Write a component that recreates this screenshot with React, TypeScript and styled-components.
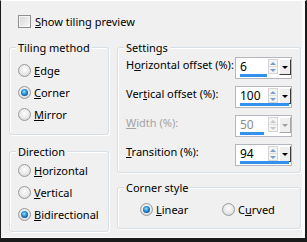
import styled, { createGlobalStyle } from 'styled-components';

const GlobalStyle = createGlobalStyle`
  html, body {
    margin: 0;
    padding: 0;
    background: #f0f0f0;
  }
  body {
    font-family: "Noto Sans", "Liberation Sans", sans-serif;
  }
`;

const Dialog = styled.div`
  box-sizing: border-box;
  width: 307px;
  height: 242px;
  padding: 13px 0 0 8px;
  background: #f0f0f0;
  border-top: 1px solid #fff;
  border-left: 1px solid #1a1a1a;
  border-right: 2px solid #1a1a1a;
  border-bottom: 4px solid #1a1a1a;
  box-shadow: inset -3px -1px 0 #fbfbfb;
  font-size: 11px;
  line-height: 15px;
  color: #000;
`;

const PreviewRow = styled.label`
  display: flex;
  align-items: center;
  gap: 4px;
  height: 15px;
  margin-left: 9px;
`;

const CheckBox = styled.span`
  box-sizing: border-box;
  width: 13px;
  height: 13px;
  flex: none;
  border: 1px solid #8e8f8f;
  background: linear-gradient(135deg, #d4d4d4 0%, #eaeaea 55%, #f8f8f8 100%);
  box-shadow: inset 0 0 0 1px #f6f6f6;
`;

const Columns = styled.div`
  display: grid;
  grid-template-columns: 100px 184px;
  column-gap: 8px;
  margin-top: 11px;
`;

const Column = styled.div<{ $gap: number }>`
  display: flex;
  flex-direction: column;
  gap: ${(p) => p.$gap}px;
`;

const Group = styled.fieldset<{ $top: number; $bottom: number }>`
  margin: 0;
  min-width: 0;
  padding: ${(p) => p.$top}px 8px ${(p) => p.$bottom}px;
  border: 1px solid #d5dfe5;
  border-radius: 3px;
  box-shadow: inset 1px 1px 0 #fff, 1px 1px 0 #fff;
`;

const GroupTitle = styled.legend`
  padding: 0 2px;
  margin-left: -2px;
  background: #f0f0f0;
  line-height: 15px;
`;

const OptionRow = styled.label`
  display: flex;
  align-items: center;
  gap: 3px;
  height: 22px;
  white-space: nowrap;
`;

const Radio = styled.span<{ $checked?: boolean }>`
  box-sizing: border-box;
  width: 13px;
  height: 13px;
  flex: none;
  display: flex;
  align-items: center;
  justify-content: center;
  border-radius: 50%;
  border: 1px solid #9a9a9a;
  background: radial-gradient(circle at 50% 40%, #fdfdfd 0%, #e8e8e8 55%, #cdcdcd 100%);

  &::after {
    content: '';
    display: ${(p) => (p.$checked ? 'block' : 'none')};
    width: 7px;
    height: 7px;
    border-radius: 50%;
    background: radial-gradient(circle at 45% 40%, #9fe2ff 0%, #2a94d8 40%, #0c4a86 80%, #0a3563 100%);
  }
`;

const CornerOptions = styled.div`
  display: grid;
  grid-template-columns: 82px auto;
  padding-left: 14px;
`;

const FieldList = styled.div`
  display: flex;
  flex-direction: column;
  gap: 7px;
`;

const FieldRow = styled.div`
  display: flex;
  justify-content: space-between;
  align-items: flex-start;
  height: 22px;
`;

const FieldLabel = styled.span<{ $disabled?: boolean }>`
  white-space: nowrap;
  color: ${(p) => (p.$disabled ? '#a3a3a3' : '#000')};
`;

const Spin = styled.div`
  box-sizing: border-box;
  width: 57px;
  height: 22px;
  display: flex;
  flex-direction: column;
  padding-bottom: 1px;
  border: 1px solid #b4b7bd;
  background: #fff;
`;

const SpinTop = styled.div`
  display: flex;
  height: 16px;
`;

const SpinValue = styled.span<{ $disabled?: boolean }>`
  flex: 1;
  padding-left: 4px;
  font-size: 12px;
  line-height: 17px;
  color: ${(p) => (p.$disabled ? '#8c8c8c' : '#000')};
`;

const Stepper = styled.div`
  box-sizing: border-box;
  width: 10px;
  height: 15px;
  margin: 1px 1px 0;
  display: flex;
  flex-direction: column;
  border: 1px solid #d6d6d6;
  background: #f4f4f4;
`;

const StepHalf = styled.span<{ $down?: boolean; $disabled?: boolean }>`
  flex: 1;
  display: flex;
  align-items: center;
  justify-content: center;
  border-top: ${(p) => (p.$down ? '1px solid #e0e0e0' : 'none')};

  &::before {
    content: '';
    width: 0;
    height: 0;
    border-left: 3px solid transparent;
    border-right: 3px solid transparent;
    ${(p) => (p.$down ? 'border-top' : 'border-bottom')}: 3px solid
      ${(p) => (p.$disabled ? '#c8c8c8' : '#7c9fcb')};
  }
`;

const DropButton = styled.span<{ $disabled?: boolean }>`
  box-sizing: border-box;
  width: 12px;
  height: 16px;
  margin-top: 1px;
  display: flex;
  align-items: center;
  justify-content: center;
  background: #efefef;
  border-top: 1px solid #fff;
  border-left: 1px solid #fff;
  border-right: 1px solid ${(p) => (p.$disabled ? '#a8a8a8' : '#3c3c3c')};
  border-bottom: 1px solid ${(p) => (p.$disabled ? '#a8a8a8' : '#3c3c3c')};

  &::before {
    content: '';
    width: 0;
    height: 0;
    border-left: 3px solid transparent;
    border-right: 3px solid transparent;
    border-top: 3px solid ${(p) => (p.$disabled ? '#a0a0a0' : '#000')};
  }
`;

const Bar = styled.div`
  height: 3px;
  margin: 0 2px 0 4px;
`;

const BarFill = styled.div`
  height: 100%;
  background: #3391ee;
`;

type SpinField = {
  label: React.ReactNode;
  value: number;
  fill: number;
  disabled?: boolean;
};

const fields: SpinField[] = [
  { label: <>H<u>o</u>rizontal offset (%):</>, value: 6, fill: 0.56 },
  { label: <>Ver<u>t</u>ical offset (%):</>, value: 100, fill: 1 },
  { label: <><u>W</u>idth (%):</>, value: 50, fill: 0.48, disabled: true },
  { label: <><u>T</u>ransition (%):</>, value: 94, fill: 1 },
];

const SpinBox = ({ value, fill, disabled }: SpinField) => (
  <Spin>
    <SpinTop>
      <SpinValue $disabled={disabled}>{value}</SpinValue>
      <Stepper>
        <StepHalf $disabled={disabled} />
        <StepHalf $down $disabled={disabled} />
      </Stepper>
      <DropButton $disabled={disabled} />
    </SpinTop>
    <Bar>
      <BarFill style={{ width: `${fill * 100}%` }} />
    </Bar>
  </Spin>
);

export default function App() {
  return (
    <Dialog>
      <GlobalStyle />
      <PreviewRow>
        <CheckBox />
        <span>
          <u>S</u>how tiling preview
        </span>
      </PreviewRow>
      <Columns>
        <Column $gap={9}>
          <Group $top={4} $bottom={9}>
            <GroupTitle>Tiling method</GroupTitle>
            <OptionRow>
              <Radio />
              <span><u>E</u>dge</span>
            </OptionRow>
            <OptionRow>
              <Radio $checked />
              <span><u>C</u>orner</span>
            </OptionRow>
            <OptionRow>
              <Radio />
              <span><u>M</u>irror</span>
            </OptionRow>
          </Group>
          <Group $top={0} $bottom={6}>
            <GroupTitle>Direction</GroupTitle>
            <OptionRow>
              <Radio />
              <span><u>H</u>orizontal</span>
            </OptionRow>
            <OptionRow>
              <Radio />
              <span><u>V</u>ertical</span>
            </OptionRow>
            <OptionRow>
              <Radio $checked />
              <span><u>B</u>idirectional</span>
            </OptionRow>
          </Group>
        </Column>
        <Column $gap={7}>
          <Group $top={2} $bottom={6}>
            <GroupTitle>Settings</GroupTitle>
            <FieldList>
              {fields.map((f, i) => (
                <FieldRow key={i}>
                  <FieldLabel $disabled={f.disabled}>{f.label}</FieldLabel>
                  <SpinBox {...f} />
                </FieldRow>
              ))}
            </FieldList>
          </Group>
          <Group $top={3} $bottom={8}>
            <GroupTitle>Corner style</GroupTitle>
            <CornerOptions>
              <OptionRow>
                <Radio $checked />
                <span><u>L</u>inear</span>
              </OptionRow>
              <OptionRow>
                <Radio />
                <span>C<u>u</u>rved</span>
              </OptionRow>
            </CornerOptions>
          </Group>
        </Column>
      </Columns>
    </Dialog>
  );
}
